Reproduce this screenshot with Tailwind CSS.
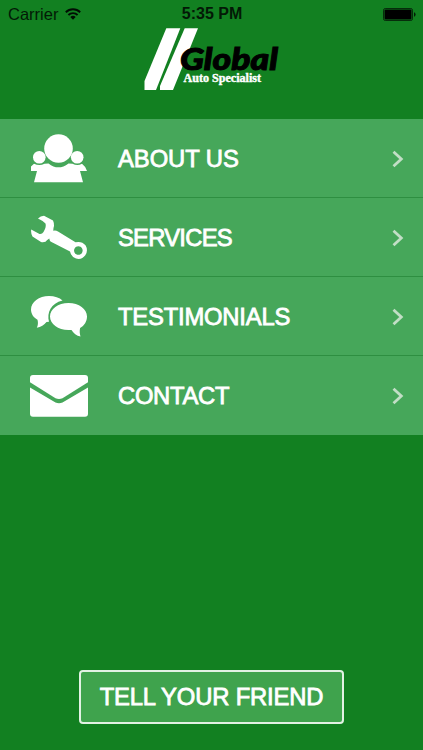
<!DOCTYPE html>
<html lang="en">

<head>
    <meta charset="UTF-8">
    <meta name="viewport" content="width=device-width, initial-scale=1.0">
    <title>Global Auto Specialist</title>
    <script src="https://cdn.jsdelivr.net/npm/@tailwindcss/browser@4"></script>
</head>

<body class="bg-[#128021] font-['Liberation_Sans',Arial,sans-serif]">
    <div class="w-[423px] h-[750px] flex flex-col overflow-hidden">

        <!-- Status Bar -->
        <div class="h-7 shrink-0 grid grid-cols-3 items-center pl-2 pr-[7px] text-black">
            <div class="flex items-center gap-[7px]">
                <span class="text-[16.5px] leading-7 opacity-80">Carrier</span>
                <svg class="w-4 h-3 opacity-90" viewBox="0 0 16 12" fill="none" stroke="#000" stroke-width="1.9">
                    <path d="M.8 4.2a10.3 10.3 0 0 1 14.4 0M3.4 7a6.6 6.6 0 0 1 9.2 0" />
                    <path d="M5.3 9a3.9 3.9 0 0 1 5.4 0L8 11.8z" fill="#000" stroke="none" />
                </svg>
            </div>
            <span class="text-center text-[16px] leading-7 font-bold whitespace-nowrap opacity-80">5:35 PM</span>
            <svg class="w-[33px] h-[13px] justify-self-end" viewBox="0 0 33 13">
                <rect x=".5" y=".5" width="29" height="12" rx="1.8" fill="none" stroke="#000" stroke-opacity=".65" />
                <rect x="1.5" y="1.5" width="27" height="10" rx="1" fill="#000" />
                <path d="M31 4.2q1.6.5 1.6 2.3T31 8.8z" fill="#000" fill-opacity=".8" />
            </svg>
        </div>

        <!-- Logo -->
        <header class="h-[91px] shrink-0 pl-[140px]">
            <svg class="w-[144px] h-[66px]" viewBox="140 28 144 66">
                <path d="M166.300 28.300h14L156 90H144.500V81z" fill="#fff" />
                <path d="M184.700 28.300H198L173 90h-13V86z" fill="#fff" />
                <text x="180" y="70.300" textLength="98" lengthAdjust="spacingAndGlyphs" font-family="Lato, sans-serif" font-weight="900" font-style="italic" font-size="31" stroke="#000" stroke-width="1">Global</text>
                <text x="183.500" y="82" textLength="77.500" lengthAdjust="spacingAndGlyphs" font-family="Liberation Serif, serif" font-weight="700" font-size="11.500" fill="#fff" stroke="#fff" stroke-width=".4">Auto Specialist</text>
            </svg>
        </header>

        <!-- Menu -->
        <nav class="h-[316px] shrink-0 grid grid-rows-4 bg-[#46a75a] text-white text-[23.8px]">
            <a href="#" class="flex items-center pl-[30px] pr-[19px] border-b border-[#2e8f41]">
                <svg class="w-[58px] h-[50px]" viewBox="30 133 58 50" fill="#fff">
                    <circle cx="58.500" cy="148.500" r="14.300" />
                    <circle cx="39.300" cy="157.300" r="6.300" />
                    <circle cx="77.200" cy="157.300" r="6.300" />
                    <path d="M31 171v-4.500l3-2.800q5.500 2.800 10.500 0l4-.3q9.800 7.800 20 0l4 .3q5 2.800 9.500 0 3.500 2.500 5 7.300H80l3 11.300H34l3-11.300z" />
                </svg>
                <span class="pl-[30px] pt-px grow tracking-[-0.05px] [-webkit-text-stroke:0.8px_white]">ABOUT US</span>
                <svg class="w-3 h-[18px] mt-px" viewBox="0 0 12 18" fill="none" stroke="#c2dec6" stroke-width="2.800">
                    <path d="M1.500 1.800 9.300 9l-7.800 7.200" />
                </svg>
            </a>
            <a href="#" class="flex items-center pl-[30px] pr-[19px] border-b border-[#2e8f41]">
                <svg class="w-[58px] h-[50px]" viewBox="30 212 58 50" fill="#fff">
                    <path fill-rule="evenodd" d="M38 218.500q2.500-2.800 6-2.800l9 4.800q1 1.800 1 5.500-.8 2.500-.7 4.800 2.500-.6 4.700.7L75.500 242.300q6.300-1.500 10 3 3 5-.2 10-3.500 4.800-9.300 3.300-4.800-1.800-6-7L50.500 241.500q-1-1.200-1.200-3-2.300 1.300-3.800 3.300-2.800.8-4.500.1l-8.500-5.400q-1.800-3-1.300-7l8.300 4.500q2.500.5 4-2l1.500-3q1.200-2.800.5-5.500-3-3-7.500-5zM78.300 246.200a4.300 4.300 0 1 0 .1 0z" />
                </svg>
                <span class="pl-[30px] pt-px grow tracking-[-0.75px] [-webkit-text-stroke:0.8px_white]">SERVICES</span>
                <svg class="w-3 h-[18px] mt-px" viewBox="0 0 12 18" fill="none" stroke="#c2dec6" stroke-width="2.800">
                    <path d="M1.500 1.800 9.300 9l-7.800 7.200" />
                </svg>
            </a>
            <a href="#" class="flex items-center pl-[30px] pr-[19px] border-b border-[#2e8f41]">
                <svg class="w-[58px] h-[50px]" viewBox="30 291 58 50" fill="#fff">
                    <path d="M62.500 300.500c-3-3-8-4.500-13.500-4.500-10 0-18 6-18 13.500 0 4.300 2.500 8 6.500 10.300.8 3.200.5 5.500-.7 8 4-.8 7.500-2.800 9.700-5.800l2.500-.2c-2.500-9 2-18.500 13.500-21.300z" />
                    <path d="M68.500 303c-10.500 0-18.500 6-18.500 13.500S58 330 68.500 330l3-.1c2 3.300 5 5.600 9 6.700-.9-3-1-5.500-.4-8.500 4.300-2.500 6.900-6.800 6.900-11.600C87 309 79 303 68.500 303z" />
                </svg>
                <span class="pl-[30px] pt-px grow tracking-[-0.2px] [-webkit-text-stroke:0.8px_white]">TESTIMONIALS</span>
                <svg class="w-3 h-[18px] mt-px" viewBox="0 0 12 18" fill="none" stroke="#c2dec6" stroke-width="2.800">
                    <path d="M1.500 1.800 9.300 9l-7.800 7.200" />
                </svg>
            </a>
            <a href="#" class="flex items-center pl-[30px] pr-[19px]">
                <svg class="w-[58px] h-[50px]" viewBox="30 371 58 50" fill="#fff">
                    <path d="M30 382.300V378q0-3 3-3h52q3 0 3 3v4.300L62.500 398.200q-3.500 1.600-7 0z" />
                    <path d="M30 387.500 55.500 402.500q3.500 1.500 7 0L88 387.500v26.300q0 3-3 3H33q-3 0-3-3z" />
                </svg>
                <span class="pl-[30px] grow tracking-[-0.3px] [-webkit-text-stroke:0.8px_white]">CONTACT</span>
                <svg class="w-3 h-[18px]" viewBox="0 0 12 18" fill="none" stroke="#c2dec6" stroke-width="2.800">
                    <path d="M1.500 1.800 9.300 9l-7.800 7.200" />
                </svg>
            </a>
        </nav>

        <!-- Share Button -->
        <div class="grow flex items-end justify-center pb-[26px]">
            <button type="button"
                class="w-[265px] h-[54px] border-2 border-[#e2f2e4] rounded-[4px] bg-[#3fa34d] text-white text-[23.8px] tracking-[-0.15px] whitespace-nowrap [-webkit-text-stroke:0.8px_white]">TELL YOUR FRIEND</button>
        </div>
    </div>
</body>

</html>
